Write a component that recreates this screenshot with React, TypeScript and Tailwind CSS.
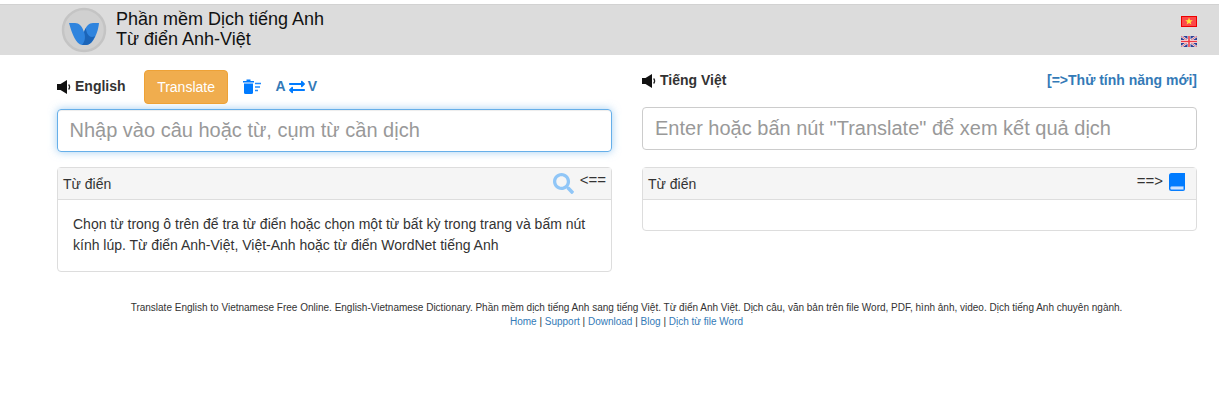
import { FaSearch, FaExchangeAlt } from 'react-icons/fa'

function Logo() {
  return (
    <svg width="46" height="46" viewBox="0 0 46 46">
      <circle cx="23" cy="23" r="21" fill="#d0d0d0" stroke="#c4c4c4" strokeWidth="2.5" />
      <path d="M8 16 H14 C18 16 21 19 23 25 C25 19 28 16 32 16 H38 C37 26 32 38 25 38 H21 C15 37 11 27 8 16 Z" fill="#2f84de" />
      <path d="M23 25 C24.5 29 24.5 34 21 38 H25 C29 38 32 34 34 29 C31 31 28 30 26 26 L24.5 21 Z" fill="#1b64b8" />
    </svg>
  )
}

function VnFlag() {
  return (
    <svg width="16" height="11" viewBox="0 0 16 11">
      <rect width="16" height="11" fill="#f81c1c" />
      <rect x="0.5" y="0.5" width="15" height="10" fill="#fb4a4a" stroke="#ee0000" />
      <polygon points="8,1.6 9,4.2 11.8,4.2 9.6,5.9 10.4,8.6 8,7 5.6,8.6 6.4,5.9 4.2,4.2 7,4.2" fill="#ffe83a" />
    </svg>
  )
}

function UkFlag() {
  return (
    <svg width="16" height="11" viewBox="0 0 16 11">
      <rect width="16" height="11" fill="#2c3f96" />
      <path d="M0 0 L16 11 M16 0 L0 11" stroke="#f2f2f2" strokeWidth="2.2" />
      <path d="M0 0 L16 11 M16 0 L0 11" stroke="#d9485c" strokeWidth="0.8" />
      <path d="M8 0 V11 M0 5.5 H16" stroke="#f6f6f6" strokeWidth="3" />
      <path d="M8 0 V11 M0 5.5 H16" stroke="#ee3a44" strokeWidth="1.6" />
    </svg>
  )
}

function Speaker() {
  return (
    <svg width="14" height="14" viewBox="0 0 14 14" className="mr-[4px]">
      <path d="M0 4 H3.5 L10 0 V14 L3.5 10 H0 Z" fill="#111111" />
      <path d="M11.6 4.5 Q13.6 7 11.6 9.5" fill="none" stroke="#222222" strokeWidth="1.3" />
    </svg>
  )
}

function ClearIcon() {
  return (
    <svg width="18" height="15" viewBox="0 0 18 15">
      <path d="M0 2 H3.5 V0.5 H7.5 V2 H11 V3.6 H0 Z" fill="#007bff" />
      <path d="M1 4.6 H10 V13.5 Q10 15 8.5 15 H2.5 Q1 15 1 13.5 Z" fill="#007bff" />
      <path d="M12 4.5 H18 M12 8 H17 M12 11.5 H15" stroke="#1f8aff" strokeWidth="1.6" />
    </svg>
  )
}

function BookIcon() {
  return (
    <svg width="16" height="18" viewBox="0 0 16 18">
      <path d="M2.5 0 H16 V16 Q16 18 14 18 H2.5 Q0 18 0 15.5 V2.5 Q0 0 2.5 0 Z" fill="#007bff" />
      <path d="M14.5 13.6 H3 Q1.4 13.6 1.4 15 Q1.4 16.6 3 16.6 H14.5" fill="#cfe4ff" stroke="#7fb8ff" strokeWidth="0.6" />
    </svg>
  )
}

function Panel({ head, children, padRight }: { head: React.ReactNode; children: React.ReactNode; padRight: string }) {
  return (
    <div className="rounded border border-[#dddddd] bg-white">
      <div className={`flex h-[32px] items-center justify-between border-b border-[#dddddd] bg-[#f5f5f5] pl-[5px] ${padRight} text-[14px] text-[#333333]`}>
        <span className="mt-[1px]">Từ điển</span>
        {head}
      </div>
      {children}
    </div>
  )
}

export default function App() {
  return (
    <div className="min-h-[403px] bg-white pt-[4px] text-[#333333] [font-family:'Liberation_Sans',Arial,sans-serif]">
      <header className="flex h-[51px] items-center justify-between border-t border-[#d2d2d2] bg-[#dcdcdc] pl-[61px] pr-[22px]">
        <div className="flex items-center gap-[9px]">
          <Logo />
          <div className="-mt-[2px] text-[18px] leading-[20px] text-[#111111]">
            <div>Phần mềm Dịch tiếng Anh</div>
            <div>Từ điển Anh-Việt</div>
          </div>
        </div>
        <div className="flex flex-col gap-[9px] pt-[3px]">
          <VnFlag />
          <UkFlag />
        </div>
      </header>

      <main className="grid grid-cols-2 gap-[30px] pl-[57px] pr-[22px]">
        <section>
          <div className="flex h-[54px] items-end pb-[5px]">
            <div className="flex items-center pb-[7px]">
              <Speaker />
              <span className="text-[14px] font-bold">English</span>
            </div>
            <button className="ml-[18px] h-[34px] w-[84px] rounded border border-[#eea236] bg-[#f0ad4e] pl-[1px] text-[14px] text-white">
              Translate
            </button>
            <div className="ml-[15px] flex items-center pb-[7px]">
              <ClearIcon />
              <span className="ml-[15px] text-[14px] font-bold text-[#337ab7]">A</span>
              <FaExchangeAlt className="mx-[3px] text-[16px] text-[#007bff]" />
              <span className="text-[14px] font-bold text-[#337ab7]">V</span>
            </div>
          </div>
          <input
            placeholder="Nhập vào câu hoặc từ, cụm từ cần dịch"
            className="block h-[43px] w-full rounded border border-[#66afe9] pl-[11.5px] pr-[11px] text-[20px] shadow-[inset_0_1px_1px_rgba(0,0,0,0.075),0_0_8px_rgba(102,175,233,0.6)] outline-none placeholder:text-[#999999]"
          />
          <div className="mt-[15px]">
            <Panel
              padRight="pr-[5px]"
              head={
                <div className="flex items-start">
                  <FaSearch className="text-[21px] text-[#90c6f7]" />
                  <span className="ml-[6px] text-[15px] leading-[14px]">&lt;==</span>
                </div>
              }
            >
              <p className="px-[15px] pb-[15px] pt-[14px] text-[14px] leading-[21px]">
                Chọn từ trong ô trên để tra từ điển hoặc chọn một từ bất kỳ trong trang và bấm nút kính lúp. Từ điển Anh-Việt, Việt-Anh hoặc từ điển WordNet tiếng Anh
              </p>
            </Panel>
          </div>
        </section>

        <section>
          <div className="flex h-[52px] items-center justify-between pb-[1px]">
            <div className="flex items-center">
              <Speaker />
              <span className="text-[14px] font-bold">Tiếng Việt</span>
            </div>
            <a className="text-[14px] font-bold text-[#337ab7]">[=&gt;Thử tính năng mới]</a>
          </div>
          <input
            placeholder={'Enter hoặc bấn nút "Translate" để xem kết quả dịch'}
            className="block h-[43px] w-full rounded border border-[#cccccc] px-[12px] text-[20px] outline-none placeholder:text-[#999999]"
          />
          <div className="mt-[17px]">
            <Panel
              padRight="pr-[11px]"
              head={
                <div className="-mt-[4px] flex items-start">
                  <span className="mr-[6px] mt-[1px] text-[15px] leading-[14px]">==&gt;</span>
                  <BookIcon />
                </div>
              }
            >
              <div className="h-[30px]" />
            </Panel>
          </div>
        </section>
      </main>

      <footer className="ml-[34px] mt-[29px] text-center text-[10px] leading-[14px] text-[#333333]">
        <div>
          Translate English to Vietnamese Free Online. English-Vietnamese Dictionary. Phần mềm dịch tiếng Anh sang tiếng Việt. Từ điển Anh Việt. Dịch câu, văn bản trên file Word, PDF, hình ảnh, video. Dịch tiếng Anh chuyên ngành.
        </div>
        <div>
          <a className="text-[#337ab7]">Home</a> | <a className="text-[#337ab7]">Support</a> | <a className="text-[#337ab7]">Download</a> | <a className="text-[#337ab7]">Blog</a> | <a className="text-[#337ab7]">Dịch từ file Word</a>
        </div>
      </footer>
    </div>
  )
}
